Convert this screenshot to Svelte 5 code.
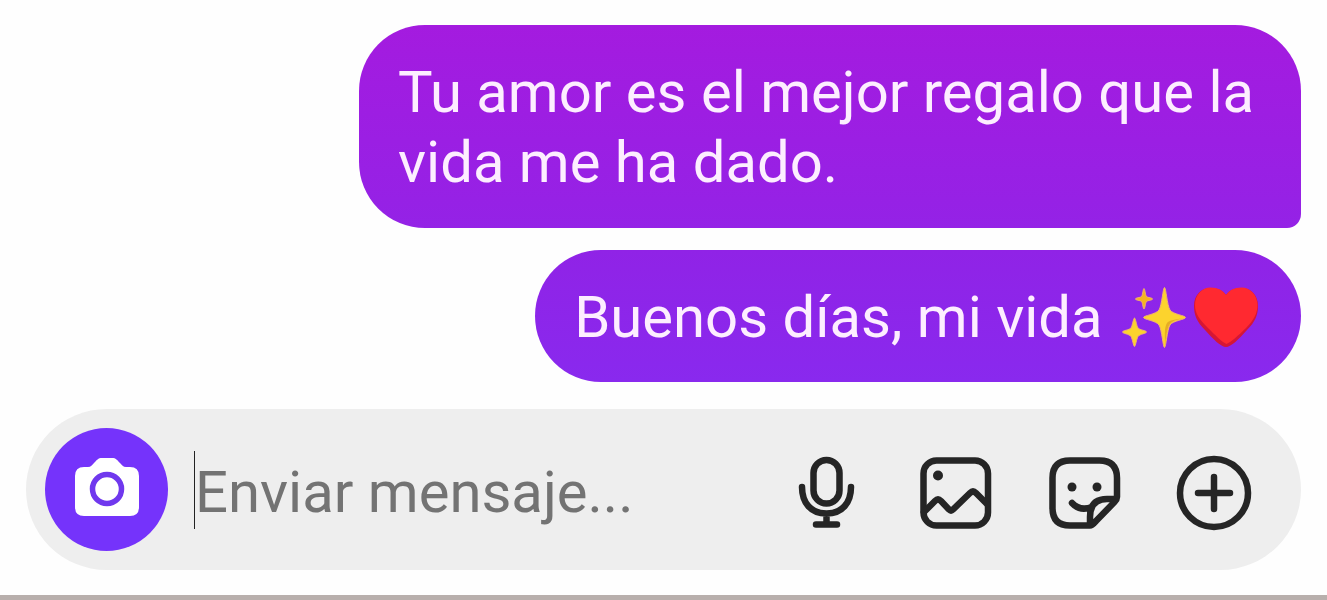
<script>
  let draft = $state('');
</script>

<main class="chat">
  <section class="messages" aria-label="Mensajes">
    <p class="bubble joined">Tu amor es el mejor regalo que la vida me ha dado.</p>
    <p class="bubble">
      Buenos días, mi vida
      <span class="emojis">
        <svg class="emoji" viewBox="-1 0 72 70" role="img" aria-label="destellos">
          <g fill="#fcd32d" stroke="#f0b070" stroke-width="1" stroke-linejoin="round">
            <path d="M46.500 5.500C48 5.500 49 23 52 28C55 32.500 67.500 33.500 67.500 35.500C67.500 37.500 55 38.500 52 43C49 48 48 65.500 46.500 65.500C45 65.500 44 48 41 43C38 38.500 25.500 37.500 25.500 35.500C25.500 33.500 38 32.500 41 28C44 23 45 5.500 46.500 5.500Z" />
            <path d="M16.500 36C17.500 36 18.500 43.500 20 46C21.500 48 28.500 48.500 28.500 50C28.500 51.500 21.500 52 20 54.500C18.500 57 17.500 64.500 16.500 64.500C15.500 64.500 14.500 57 13 54.500C11.500 52 4.500 51.500 4.500 50C4.500 48.500 11.500 48 13 46C14.500 43.500 15.500 36 16.500 36Z" />
            <path fill="#f5b51f" d="M26 6.500C27 6.500 27 12.500 28.500 14.500C30 15.800 34.500 15.800 34.500 17C34.500 18.200 30 18.200 28.500 19.500C27 21.500 27 27 26 27C25 27 25 21.500 23.500 19.500C22 18.200 17.500 18.200 17.500 17C17.500 15.800 22 15.800 23.500 14.500C25 12.500 25 6.500 26 6.500Z" />
          </g>
          <path fill="#e6ad24" d="M66 36C60 37.500 54 38.500 51.500 42.500C49 46 48 56 47 63C47 54 46 46 49 41C51 38 58 37.500 66 36Z" />
        </svg><svg class="emoji" viewBox="-1 1 72 70" role="img" aria-label="corazón">
          <path fill="#d51636" d="M36 66C31 66 23 58 15 49C7 41 4 34 4 25C4 14 11 7 20.500 7C27.500 7 33 9.500 36 14C39 9.500 44.500 7 51.500 7C61 7 68 14 68 25C68 34 65 41 57 49C49 58 41 66 36 66Z" />
          <path fill="#ff2930" d="M36.500 63C32 61 25 54 18 47C9 38 5 32 5 24C5 14 12 6.500 20.500 6.500C28 6.500 33 9.500 36 14C39 9.500 44 6.500 51.500 6.500C60 6.500 67.500 14 67.500 24C67.500 32 64 39 56 47C49 54 41 61 36.500 63Z" />
        </svg>
      </span>
    </p>
  </section>

  <form class="composer" onsubmit={(e) => e.preventDefault()}>
    <button class="camera" type="button" aria-label="Cámara">
      <svg viewBox="0 0 66 60">
        <path fill="#fff" d="M10 10H14C17 10 18 8 20 6C23 3 24 1 28 1H38C42 1 43 3 46 6C48 8 49 10 52 10H56Q65 10 65 19V50Q65 59 56 59H10Q1 59 1 50V19Q1 10 10 10Z" />
        <circle cx="33" cy="32" r="14.500" fill="none" stroke="#7038ee" stroke-width="5.500" />
      </svg>
    </button>
    <input type="text" placeholder="Enviar mensaje..." aria-label="Enviar mensaje" bind:value={draft} />
    <div class="tools">
      <button type="button" aria-label="Mensaje de voz">
        <svg viewBox="0 0 76 76">
          <rect x="24.500" y="5" width="26" height="43.500" rx="13" />
          <path d="M13 32C13 48 22 58.500 37.500 58.500S62 48 62 32M37.500 58.500V69.500M27 69.500H48" />
        </svg>
      </button>
      <button type="button" aria-label="Galería">
        <svg viewBox="0 0 76 76">
          <rect x="5.500" y="5.500" width="64.500" height="65" rx="13" />
          <path d="M6 57L17 46Q20 43 23 46L31 54.500Q33 56.500 35 54.500L52 38Q55 35 58 38L69 49" />
          <circle class="dot" cx="20" cy="20.500" r="5" />
        </svg>
      </button>
      <button type="button" aria-label="Stickers">
        <svg viewBox="0 0 76 76">
          <path d="M43 70.500H23Q5.500 70.500 5.500 53V23Q5.500 5.500 23 5.500H52.500Q70 5.500 70 23V42Q70 44.500 67.500 47L49 66Q45 70.500 43 70.500V62Q43 44 60 44H69M25 48C30 53.500 37 55 45 52" />
          <circle class="dot" cx="25" cy="32" r="4.500" />
          <circle class="dot" cx="50" cy="32" r="4.500" />
        </svg>
      </button>
      <button type="button" aria-label="Más opciones">
        <svg viewBox="0 0 76 76">
          <circle cx="38" cy="38" r="34" />
          <path d="M38 22V54M22 38H54" />
        </svg>
      </button>
    </div>
  </form>
</main>

<style>
  :global(body) {
    margin: 0;
    background: #fefefe;
  }

  .chat {
    box-sizing: border-box;
    display: flex;
    flex-direction: column;
    gap: 27px;
    min-height: 100vh;
    padding: 25px 26px 0;
    font-family: Roboto, sans-serif;
    font-size: 58px;
    border-bottom: 5px solid #b8afac;
  }

  .messages {
    display: flex;
    flex-direction: column;
    align-items: flex-end;
    gap: 22px;
    padding-left: 333px;
  }

  .bubble {
    box-sizing: border-box;
    margin: 0;
    padding: 32px 40px 30px 39px;
    border-radius: 66px;
    line-height: 70px;
    color: #fdeeff;
    background: linear-gradient(#9023e6, #8929ee);
  }

  .joined {
    padding-bottom: 31px;
    border-bottom-right-radius: 14px;
    background: linear-gradient(#a41bdf, #9422e6);
  }

  .emojis {
    white-space: nowrap;
  }

  .emoji {
    width: 72px;
    height: 70px;
    vertical-align: top;
  }

  .composer {
    box-sizing: border-box;
    display: flex;
    align-items: center;
    height: 161px;
    padding: 0 49px 0 19px;
    border-radius: 81px;
    background: #eee;
  }

  button {
    flex: none;
    display: grid;
    place-items: center;
    padding: 0;
    border: 0;
    background: none;
    cursor: pointer;
  }

  .camera {
    width: 123px;
    height: 123px;
    border-radius: 50%;
    background: #7533fb;
  }

  .camera svg {
    width: 66px;
    height: 60px;
    margin-bottom: 6px;
  }

  input {
    box-sizing: border-box;
    flex: 1;
    min-width: 0;
    height: 78px;
    margin-left: 26px;
    padding: 4px 0 0;
    border: 0;
    border-left: 1px solid #222;
    outline: 0;
    color: #222;
    background: none;
    font: inherit;
  }

  input::placeholder {
    color: #737373;
    opacity: 1;
  }

  .tools {
    display: flex;
    gap: 53px;
    padding-top: 6px;
  }

  .tools svg {
    width: 76px;
    height: 76px;
    fill: none;
    stroke: #252525;
    stroke-width: 6.5;
    stroke-linecap: round;
    stroke-linejoin: round;
  }

  .tools .dot {
    fill: #252525;
    stroke: none;
  }
</style>
